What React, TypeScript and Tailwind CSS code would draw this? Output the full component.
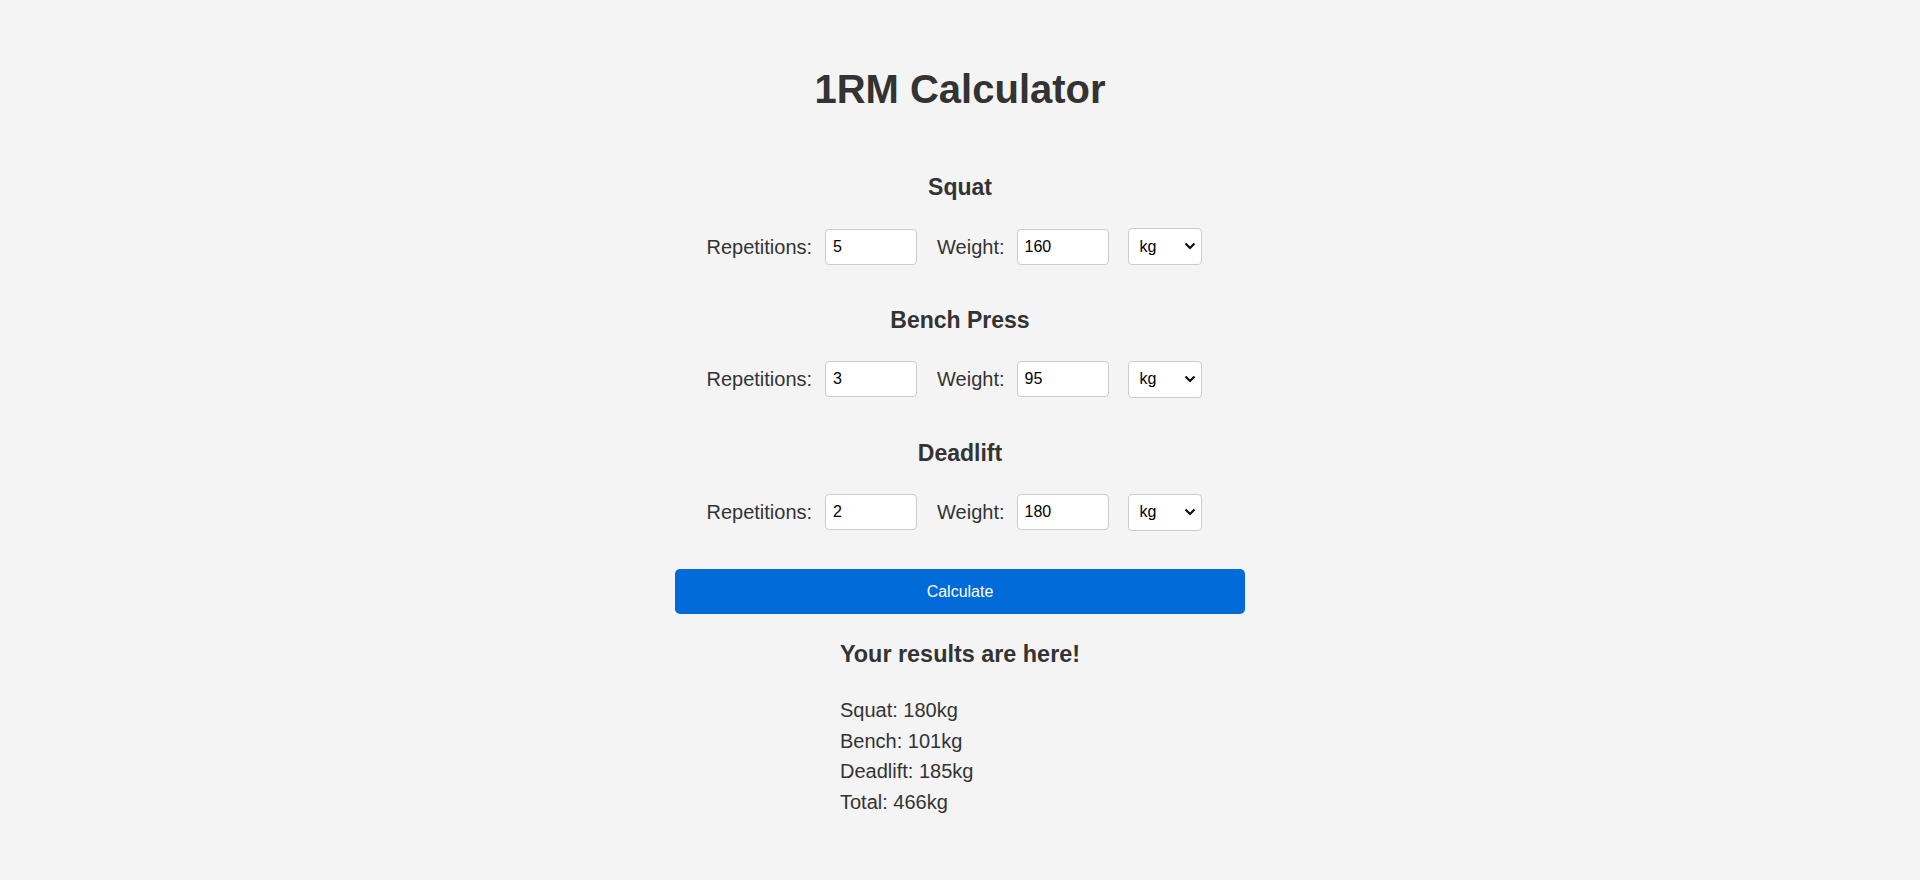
import React from 'react';

const lifts = [
  { name: 'Squat', reps: '5', weight: '160' },
  { name: 'Bench Press', reps: '3', weight: '95' },
  { name: 'Deadlift', reps: '2', weight: '180' },
];

const results = ['Squat: 180kg', 'Bench: 101kg', 'Deadlift: 185kg', 'Total: 466kg'];

const LiftRow = ({ reps, weight }: { reps: string; weight: string }) => (
  <div className="flex items-center justify-center mt-[27px]">
    <label className="text-[20px] leading-[24px] mr-[13px]">Repetitions:</label>
    <input
      type="text"
      defaultValue={reps}
      className="w-[92px] h-[36px] px-[7px] bg-white border border-[#cccccc] rounded-[4px] text-[16px] text-black outline-none mr-[20px]"
    />
    <label className="text-[20px] leading-[24px] mr-[12px]">Weight:</label>
    <input
      type="text"
      defaultValue={weight}
      className="w-[92px] h-[36px] px-[7px] bg-white border border-[#cccccc] rounded-[4px] text-[16px] text-black outline-none mr-[19px]"
    />
    <div className="relative mr-[12px]">
      <select
        defaultValue="kg"
        className="appearance-none w-[74px] h-[37px] pl-[11px] bg-white border border-[#cccccc] rounded-[4px] text-[16px] text-black outline-none"
      >
        <option value="kg">kg</option>
        <option value="lbs">lbs</option>
      </select>
      <svg
        className="pointer-events-none absolute right-[6px] top-[14px]"
        width="12"
        height="8"
        viewBox="0 0 12 8"
        fill="none"
      >
        <path d="M1.5 1.5 L6 6 L10.5 1.5" stroke="#111" strokeWidth="2.2" />
      </svg>
    </div>
  </div>
);

const App = () => {
  return (
    <div className="min-h-[880px] bg-[#f4f4f4] text-[#333333] font-['Liberation_Sans',Arial,sans-serif] pt-[65px]">
      <h1 className="text-center text-[40px] leading-[48px] font-bold">1RM Calculator</h1>
      <div className="mt-[60px]">
        {lifts.map((lift, i) => (
          <div key={lift.name} className={i > 0 ? 'mt-[40.75px]' : ''}>
            <h2 className="text-center text-[23px] leading-[28px] font-bold">{lift.name}</h2>
            <LiftRow reps={lift.reps} weight={lift.weight} />
          </div>
        ))}
      </div>
      <div className="flex justify-center mt-[38.5px]">
        <button
          type="button"
          className="w-[570px] h-[45px] rounded-[5px] bg-[#006ad9] text-white text-[16px]"
        >
          Calculate
        </button>
      </div>
      <div className="flex justify-center mt-[26px]">
        <div className="text-left">
          <h3 className="text-[23.4px] leading-[28px] font-bold">Your results are here!</h3>
          <div className="mt-[27px] text-[20px] leading-[30.5px]">
            {results.map((r) => (
              <div key={r}>{r}</div>
            ))}
          </div>
        </div>
      </div>
    </div>
  );
};

export default App;
